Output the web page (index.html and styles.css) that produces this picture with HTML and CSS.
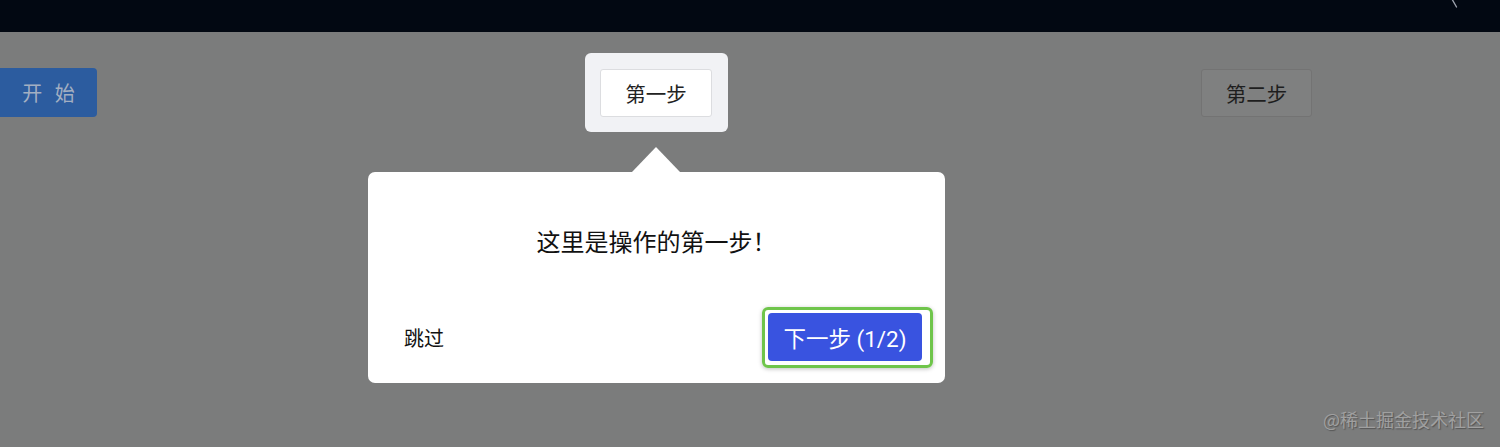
FILE: index.html
```html
<!DOCTYPE html>
<html lang="zh">
<head>
<meta charset="utf-8">
<link rel="stylesheet" href="styles.css">
</head>
<body>
<header class="topbar">
  <svg class="search-tip" width="10" height="10" viewBox="0 0 10 10"><path d="M1.5 0 L5.5 7" stroke="#9da2ad" stroke-width="1.4" stroke-linecap="round"/></svg>
</header>
<main class="stage">
  <div class="row">
    <button class="btn-start">开 始</button>
    <div class="spotlight">
      <button class="btn-step">第一步</button>
    </div>
    <button class="btn-step btn-dim">第二步</button>
  </div>
  <div class="popover">
    <div class="arrow"></div>
    <p class="pop-title">这里是操作的第一步！</p>
    <div class="pop-footer">
      <span class="skip">跳过</span>
      <span class="focus-ring"><button class="btn-next">下一步 (1/2)</button></span>
    </div>
  </div>
  <div class="watermark">@稀土掘金技术社区</div>
</main>
</body>
</html>
```
FILE: styles.css
```css
html, body {
  margin: 0;
  padding: 0;
}
body {
  width: 1500px;
  height: 447px;
  overflow: hidden;
  background: #7b7c7c;
  font-family: "Noto Sans CJK SC", "Noto Sans", sans-serif;
}
.topbar {
  height: 32px;
  background: #020812;
  position: relative;
}
.search-tip {
  position: absolute;
  left: 1451px;
  top: 0;
}
.stage {
  position: relative;
  height: 415px;
}
.row {
  display: flex;
  align-items: flex-start;
  padding-top: 21px;
}
.btn-start {
  margin-top: 15px;
  width: 97px;
  height: 49px;
  border: none;
  border-radius: 0 4px 4px 0;
  background: #2c5c9f;
  color: #a3afc2;
  font-family: inherit;
  font-size: 20px;
  letter-spacing: 4px;
  padding: 0 0 0 4px;
}
.spotlight {
  margin-left: 488px;
  padding: 16px 16px 15px 15px;
  background: #f1f2f5;
  border-radius: 6px;
}
.btn-step {
  width: 112px;
  height: 48px;
  border: 1px solid #dcdde0;
  border-radius: 3px;
  background: #ffffff;
  color: #222;
  font-family: inherit;
  font-size: 20.5px;
  padding: 0;
}
.btn-dim {
  margin-left: 473px;
  margin-top: 16px;
  width: 111px;
  background: #7f8080;
  border-color: #737373;
  color: #1e1e1e;
}
.popover {
  position: absolute;
  left: 368px;
  top: 140px;
  width: 577px;
  height: 211px;
  background: #ffffff;
  border-radius: 7px;
  box-sizing: border-box;
  display: flex;
  flex-direction: column;
}
.arrow {
  position: absolute;
  left: 264px;
  top: -25px;
  width: 0;
  height: 0;
  border-left: 24px solid transparent;
  border-right: 24px solid transparent;
  border-bottom: 25px solid #ffffff;
}
.pop-title {
  margin: 51px 0 0;
  text-align: center;
  font-size: 24px;
  line-height: 36px;
  color: #111;
}
.pop-footer {
  margin-top: auto;
  display: flex;
  justify-content: space-between;
  align-items: center;
  padding: 0 12px 15px 36px;
}
.skip {
  font-size: 20px;
  color: #111;
}
.focus-ring {
  display: block;
  padding: 3px 8px 4px 3px;
  border: 3px solid #6fc54b;
  border-radius: 6px;
  box-shadow: 0 1px 4px rgba(0,0,0,0.25);
}
.btn-next {
  display: block;
  width: 154px;
  height: 48px;
  border: none;
  border-radius: 4px;
  background: #3953e0;
  color: #ffffff;
  font-family: "Roboto", "Noto Sans CJK SC", sans-serif;
  font-size: 22.5px;
  padding: 0;
}
.watermark {
  position: absolute;
  right: 16px;
  bottom: 15px;
  font-size: 18px;
  color: #a0a0a0;
  text-shadow: 1px 1px 1px #555;
}
```
